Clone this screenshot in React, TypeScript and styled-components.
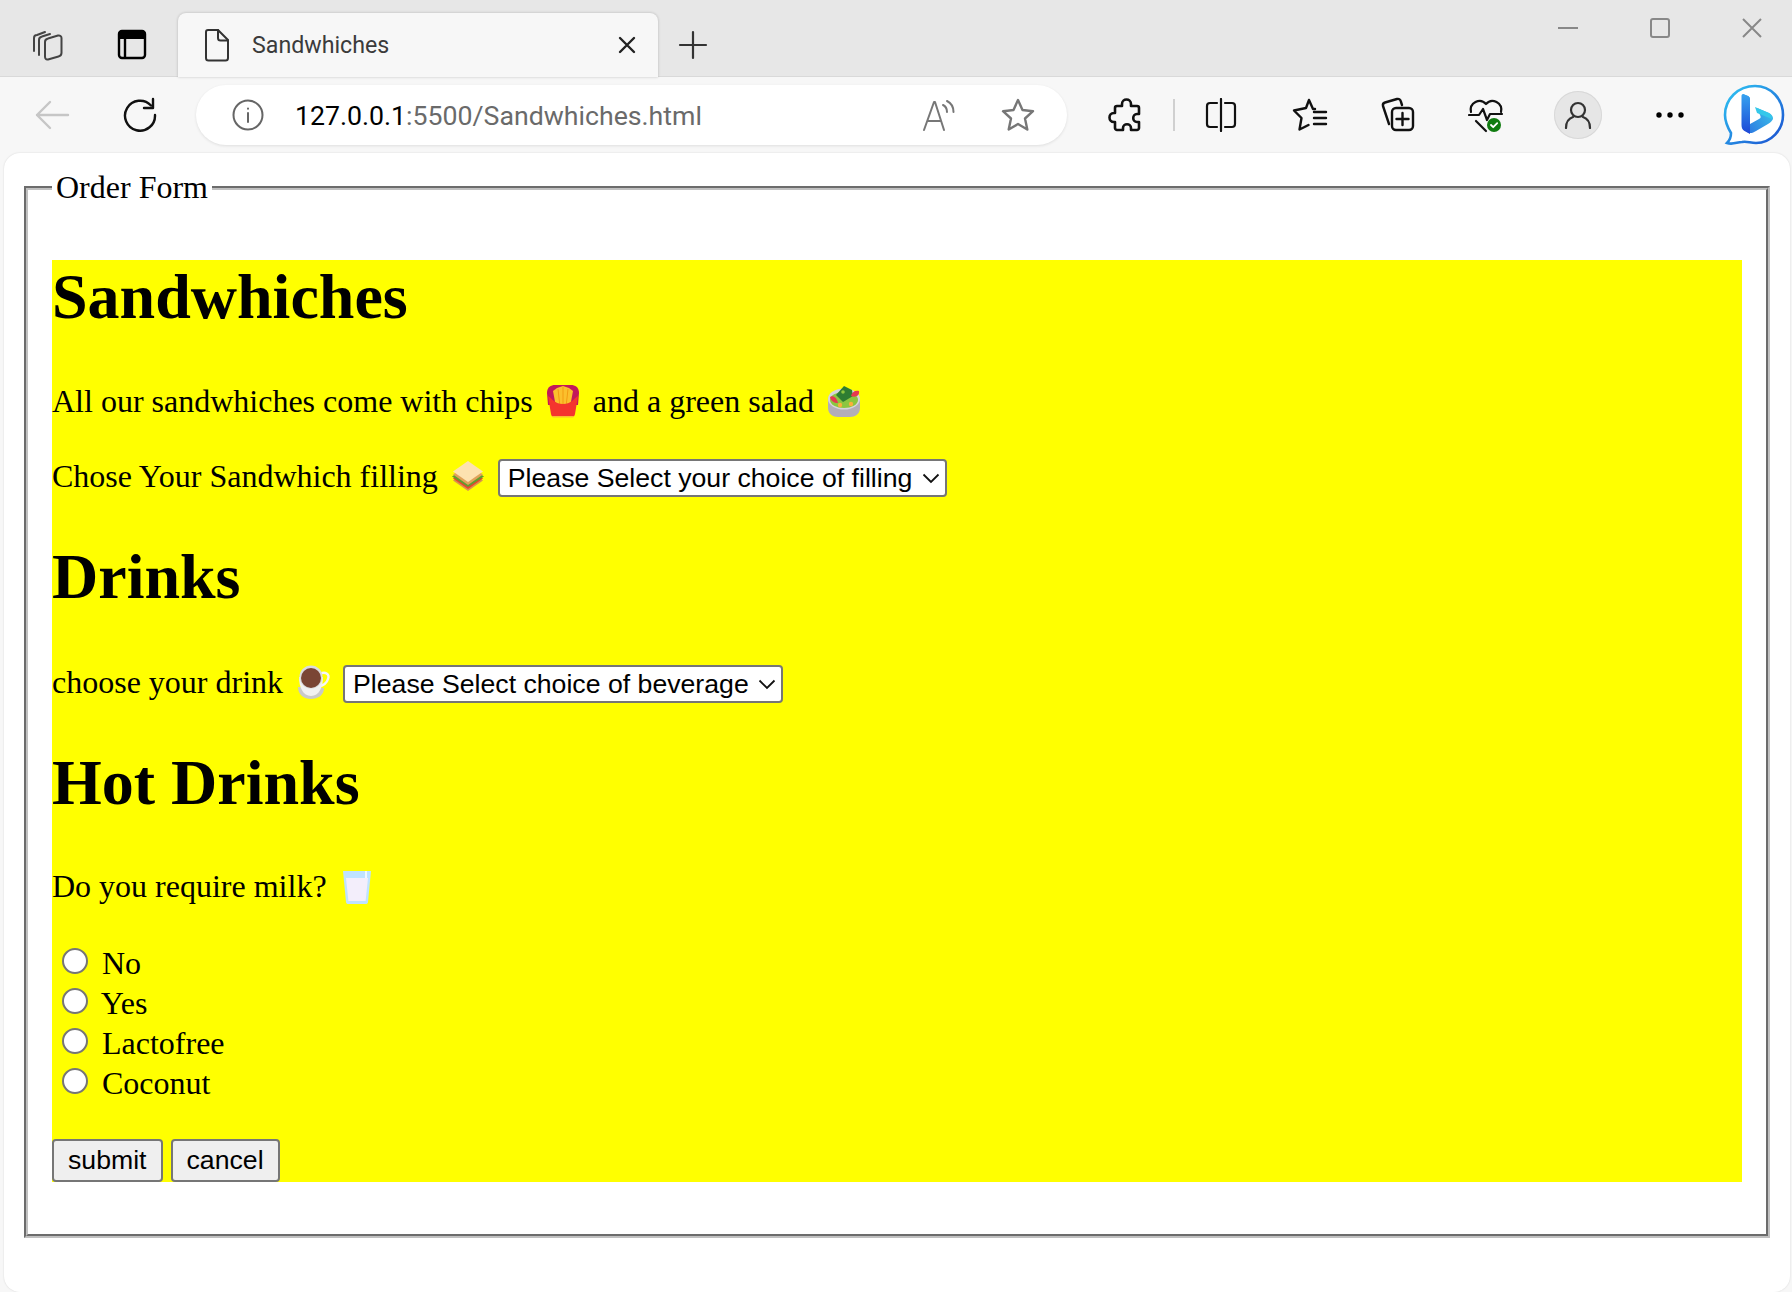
import React from 'react';
import styled, { createGlobalStyle } from 'styled-components';

const GlobalStyle = createGlobalStyle`
  html, body {
    margin: 0;
    padding: 0;
    background: #f7f7f7;
  }
  body {
    width: 1792px;
    height: 1292px;
    overflow: hidden;
  }
`;

const TitleBar = styled.div`
  height: 77px;
  background: #e7e7e7;
  display: flex;
  align-items: flex-end;
  padding-left: 30px;
  box-sizing: border-box;
  box-shadow: inset 0 -1px 0 #d9d9d9;
`;

const StripIcon = styled.div<{ $gap?: number }>`
  width: 36px;
  height: 36px;
  margin: 0 0 14px ${(p) => p.$gap ?? 0}px;
  flex: none;
`;

const Tab = styled.div`
  width: 480px;
  height: 64px;
  margin-left: 28px;
  padding: 0 22px 0 26px;
  box-sizing: border-box;
  display: flex;
  align-items: center;
  background: #f7f7f7;
  border-radius: 8px 8px 0 0;
  box-shadow: 0 0 3px rgba(0, 0, 0, 0.22);
  position: relative;
`;

const TabTitle = styled.span`
  margin-left: 22px;
  flex: 1;
  font: 400 23.2px Roboto, 'Noto Sans', sans-serif;
  color: #3b3b3b;
`;

const WindowControls = styled.div`
  margin-left: auto;
  margin-right: -6px;
  align-self: flex-start;
  display: flex;
  padding-top: 12px;
`;

const WindowButton = styled.div`
  width: 92px;
  height: 32px;
  display: flex;
  align-items: center;
  justify-content: center;
`;

const Toolbar = styled.div`
  height: 76px;
  display: flex;
  align-items: center;
  padding-left: 34px;
  box-sizing: border-box;
  background: #f7f7f7;
`;

const ToolSlot = styled.div<{ $gap?: number; $size?: number }>`
  flex: none;
  width: ${(p) => p.$size ?? 40}px;
  height: ${(p) => p.$size ?? 40}px;
  margin-left: ${(p) => p.$gap ?? 48}px;
  display: flex;
  align-items: center;
  justify-content: center;
`;

const AddressPill = styled.div`
  flex: none;
  width: 871px;
  height: 60px;
  margin-left: 38px;
  padding: 0 31px 0 36px;
  box-sizing: border-box;
  display: flex;
  align-items: center;
  background: #fff;
  border-radius: 30px;
  box-shadow: 0 1px 3px rgba(0, 0, 0, 0.1);
`;

const UrlText = styled.div`
  margin-left: 31px;
  flex: 1;
  font: 400 26.7px Roboto, 'Noto Sans', sans-serif;
  color: #6a6a6a;
  white-space: nowrap;
  padding-top: 1px;

  b {
    font-weight: 400;
    color: #000;
  }
`;

const Separator = styled.div`
  flex: none;
  width: 2px;
  height: 32px;
  margin-left: 27px;
  background: #d0d0d0;
`;

const ProfileCircle = styled.div`
  flex: none;
  width: 48px;
  height: 48px;
  margin-left: 48px;
  border-radius: 50%;
  background: #e6e6e6;
  box-shadow: inset 0 0 0 1px #d8d8d8;
  display: flex;
  align-items: center;
  justify-content: center;
`;

const BingSlot = styled.div`
  flex: none;
  width: 64px;
  height: 64px;
  margin-left: 32px;
`;

const Page = styled.main`
  height: 1139px;
  margin-left: 4px;
  margin-right: 2px;
  padding: 16px 16px 0 16px;
  box-sizing: border-box;
  background: #fff;
  border-radius: 16px;
  box-shadow: 0 0 2px rgba(0, 0, 0, 0.14);
  font: 400 32px 'Liberation Serif', 'Times New Roman', serif;
  color: #000;
`;

const OrderFieldset = styled.fieldset`
  margin: 0 4px;
  padding: 11px 24px 20px;
  border: 4px groove #c0c0c0;
`;

const OrderLegend = styled.legend`
  padding: 0 4px;
`;

const Menu = styled.div`
  background: #ff0;
  display: flow-root;
  margin: 43px 0 32px;
`;

const Heading = styled.h1`
  margin: 43px 0;
  font-size: 64px;
  font-weight: 700;
  line-height: 74px;

  &:first-child {
    margin-top: 0;
  }
`;

const Line = styled.p<{ $bottom?: number; $leading?: number; $height?: number }>`
  height: ${(p) => p.$height ?? 44}px;
  margin: 0 0 ${(p) => p.$bottom ?? 32}px;
  line-height: ${(p) => p.$leading ?? 47}px;
  white-space: nowrap;
`;

const EmojiBox = styled.svg`
  width: 44px;
  height: 44px;
  vertical-align: top;
  overflow: visible;
`;

const ChoiceSelect = styled.select<{ $top: number }>`
  appearance: none;
  height: 38px;
  margin: ${(p) => p.$top}px 0 0;
  padding: 0 32px 0 8px;
  vertical-align: top;
  font: 400 26.67px 'Liberation Sans', Arial, sans-serif;
  color: #000;
  border: 2px solid #767676;
  border-radius: 4px;
  background: #fff
    url("data:image/svg+xml,%3Csvg xmlns='http://www.w3.org/2000/svg' width='18' height='11'%3E%3Cpath d='M1.500 1.500 9 9l7.500-7.500' fill='none' stroke='%23111' stroke-width='1.800'/%3E%3C/svg%3E")
    no-repeat right 5px center;
`;

const RadioList = styled.div`
  margin: 0 0 32px;
`;

const RadioRow = styled.div`
  white-space: nowrap;
`;

const Radio = styled.input`
  appearance: none;
  box-sizing: border-box;
  width: 26px;
  height: 26px;
  margin: 6px 6px 0 10px;
  background: #fff;
  border: 2px solid #767676;
  border-radius: 50%;
`;

const ButtonRow = styled.div`
  display: flex;
  gap: 8px;
  padding-top: 5px;
`;

const FormButton = styled.button`
  height: 43px;
  padding: 0 14px;
  font: 400 26.67px 'Liberation Sans', Arial, sans-serif;
  color: #000;
  background: #efefef;
  border: 2px solid #767676;
  border-radius: 4px;
`;

const ICON = { fill: 'none', stroke: '#111', strokeWidth: 2.4, strokeLinecap: 'round', strokeLinejoin: 'round' } as const;

const Fries = () => (
  <EmojiBox viewBox="0 0 44 44" role="img" aria-label="fries">
    <path d="M6 16C6 10 10 8 14 8h16c4 0 8 2 8 8l-1 12H7z" fill="#c2185b" />
    <path d="M12 14l4-3 6-2 6 2 4 3-3 16H15z" fill="#fbc02d" />
    <path d="M17 12l2 18M22 10v20M27 12l-2 18" stroke="#f39c12" strokeWidth="1" />
    <path d="M7 19c3 1 6 8 15 8s12-7 15-8l-3 18c-.3 2-1.500 3-3 3H13c-1.500 0-2.700-1-3-3z" fill="#f4342e" />
    <path d="M10.500 39h23l-1.500 1.500H12z" fill="#fbc02d" />
  </EmojiBox>
);

const Salad = () => (
  <EmojiBox viewBox="0 0 44 44" role="img" aria-label="salad">
    <path d="M6 22h32v9c0 6-5 9-10 9H16c-5 0-10-3-10-9z" fill="#b3aeb8" />
    <ellipse cx="22" cy="22" rx="16" ry="10.500" fill="#d8d4dc" />
    <ellipse cx="22" cy="23" rx="14" ry="8" fill="#8cc63f" />
    <path d="M14 18l8-9 8 4 1 6-10 6z" fill="#2e7d32" />
    <path d="M8 20c3-2 7 1 8 6-4 0-7-2-8-6zM29 19c1-4 4-6 8-5 1 4-3 7-8 5z" fill="#e53950" />
    <circle cx="18" cy="28" r="2.200" fill="#fbb03b" />
    <circle cx="29" cy="27" r="2.200" fill="#fbb03b" />
    <circle cx="21" cy="15" r="1.800" fill="#8cc63f" />
  </EmojiBox>
);

const Sandwich = () => (
  <EmojiBox viewBox="0 0 44 44" role="img" aria-label="sandwich">
    <path d="M22 17 37 27.500 22 38 7 27.500z" fill="#d9964c" />
    <path d="M22 15 37 25.500 22 36 7 25.500z" fill="#e8452f" />
    <path d="M22 13 38 23.500 22 34 6 23.500z" fill="#5e9e2e" />
    <path d="M22 11 37 21.500 22 32 7 21.500z" fill="#e0a25a" />
    <path d="M22 8 37 18.500 22 29 7 18.500z" fill="#fde2b0" />
  </EmojiBox>
);

const Coffee = () => (
  <EmojiBox viewBox="0 0 44 44" role="img" aria-label="coffee">
    <path d="M7 30c0 8 6 12 13 12s13-4 13-11z" fill="#c9c9c9" />
    <path d="M29 17c5-3 10 0 8 5-1 4-5 7-9 7" fill="none" stroke="#f7f7f7" strokeWidth="2.400" />
    <path d="M8 20c0 10 4 19 12 19s12-9 12-19z" fill="#f1f1f1" />
    <circle cx="20" cy="20" r="11.500" fill="#dcdcdc" />
    <circle cx="20" cy="21" r="10" fill="#7a4534" />
  </EmojiBox>
);

const Milk = () => (
  <EmojiBox viewBox="0 0 44 44" role="img" aria-label="milk">
    <path d="M8 8h28l-3 31c-.2 1.500-1 2-2.500 2h-17C12 41 11.200 40.500 11 39z" fill="#bfe3ff" />
    <path d="M11 15h22l-2.400 23H13.400z" fill="#f3eefb" />
    <path d="M31 15V8" stroke="#fff" strokeWidth="1.500" />
  </EmojiBox>
);

const BingLogo = () => (
  <svg width="64" height="64" viewBox="0 0 64 64">
    <defs>
      <linearGradient id="ring" x1="0" y1="0" x2="1" y2="1">
        <stop offset="0" stopColor="#2fc6f3" />
        <stop offset="1" stopColor="#1b4fd0" />
      </linearGradient>
      <linearGradient id="stem" x1="0" y1="0" x2="0" y2="1">
        <stop offset="0" stopColor="#37a3f0" />
        <stop offset="1" stopColor="#1d46d6" />
      </linearGradient>
      <linearGradient id="wave" x1="0" y1="1" x2="1" y2="0">
        <stop offset="0" stopColor="#2a6fe0" />
        <stop offset="1" stopColor="#3fd6ec" />
      </linearGradient>
    </defs>
    <path
      d="M33 3c16 0 28 13 28 29 0 15-12 28-27 28-6 0-9-2-14-1-5 0-9 3-15 1 3-3 4-6 4-10C6 45 3 39 3 32 3 16 16 3 33 3z"
      fill="#fff"
      stroke="url(#ring)"
      strokeWidth="2.600"
    />
    <path d="M21 11l5 2c1 .5 2 1.500 2 3v25l9-5c2-1 2-2 1-4l-3-7 12 5c3 2 4 3 4 6-1 2-2 3-5 5l-12 7c-3 2-6 3-9 1l-4-3z" fill="url(#wave)" />
    <path d="M21 11c-1 0-1.500 1-1.500 2v29c0 3 1 5 3 6l5.500 3V16c0-1.500-1-2.500-2-3z" fill="url(#stem)" />
    <path d="M33 24l14 6c2 1 3 3 3 6l-15-6z" fill="#35c8ea" />
  </svg>
);

const App: React.FC = () => (
  <>
    <GlobalStyle />
    <TitleBar>
      <StripIcon>
        <svg width="36" height="36" viewBox="0 0 36 36" {...ICON} stroke="#444" strokeWidth="2">
          <path d="M4 24V11c0-2 1-3 3-3l8-3" />
          <path d="M9 28V13c0-2 1-3 3-3.500L20 7" />
          <path d="M15 30V15c0-2 1-3 3-3.500l10-3c2-.5 3.500 1 3.500 2.500v15c0 2-1 3-3 3.500l-10.500 3c-2 .5-3-1-3-3z" />
        </svg>
      </StripIcon>
      <StripIcon $gap={48}>
        <svg width="36" height="36" viewBox="0 0 36 36">
          <rect x="5" y="4" width="26" height="27" rx="3" fill="none" stroke="#000" strokeWidth="2.400" />
          <path d="M5 7a3 3 0 0 1 3-3h20a3 3 0 0 1 3 3v5H5z" fill="#000" />
          <path d="M11 12v19" stroke="#000" strokeWidth="2.400" />
        </svg>
      </StripIcon>
      <Tab>
        <svg width="26" height="34" viewBox="0 0 26 34" {...ICON} stroke="#333" strokeWidth="2">
          <path d="M4 2h10l10 10v18c0 1.500-1 2.500-2.500 2.500h-17C3 32.500 2 31.500 2 30V4c0-1.500 1-2 2-2z" />
          <path d="M14 2v8c0 1.500 1 2.500 2.500 2.500H24" />
        </svg>
        <TabTitle>Sandwhiches</TabTitle>
        <svg width="18" height="18" viewBox="0 0 18 18" {...ICON} stroke="#222">
          <path d="M2 2l14 14M16 2 2 16" />
        </svg>
      </Tab>
      <StripIcon $gap={17}>
        <svg width="36" height="36" viewBox="0 0 36 36" {...ICON} stroke="#333" strokeWidth="2.200">
          <path d="M18 5v26M5 18h26" />
        </svg>
      </StripIcon>
      <WindowControls>
        <WindowButton>
          <svg width="22" height="4" viewBox="0 0 22 4"><path d="M1 2h20" stroke="#888" strokeWidth="2" /></svg>
        </WindowButton>
        <WindowButton>
          <svg width="22" height="22" viewBox="0 0 22 22"><rect x="2" y="2" width="18" height="18" rx="2" fill="none" stroke="#888" strokeWidth="2" /></svg>
        </WindowButton>
        <WindowButton>
          <svg width="22" height="22" viewBox="0 0 22 22"><path d="M2 2l18 18M20 2 2 20" stroke="#888" strokeWidth="2" /></svg>
        </WindowButton>
      </WindowControls>
    </TitleBar>
    <Toolbar>
      <ToolSlot $gap={0} $size={36}>
        <svg width="36" height="32" viewBox="0 0 36 32" {...ICON} stroke="#c6c6c6">
          <path d="M34 16H3M16 3 3 16l13 13" />
        </svg>
      </ToolSlot>
      <ToolSlot $gap={52} $size={36}>
        <svg width="36" height="36" viewBox="0 0 36 36" {...ICON} stroke="#111">
          <path d="M29 8.500A15 15 0 1 0 33 18" />
          <path d="M31 2v9h-9" />
        </svg>
      </ToolSlot>
      <AddressPill>
        <svg width="32" height="32" viewBox="0 0 32 32" {...ICON} stroke="#666" strokeWidth="2">
          <circle cx="16" cy="16" r="14.500" />
          <path d="M16 14v9M16 9.500v.2" />
        </svg>
        <UrlText>
          <b>127.0.0.1</b>:5500/Sandwhiches.html
        </UrlText>
        <ToolSlot $gap={0} $size={36}>
          <svg width="36" height="36" viewBox="0 0 36 36" {...ICON} stroke="#777" strokeWidth="2">
            <path d="M4 33 14 5h1l9 28M7.500 24h13" />
            <path d="M23 8c3 1.500 4 4 4 7M27 4c4 2 6.500 6 6.500 11" />
          </svg>
        </ToolSlot>
        <ToolSlot $gap={44} $size={36}>
          <svg width="36" height="36" viewBox="0 0 36 36" {...ICON} stroke="#777">
            <path d="M18 3l4.500 10 10.500 1.200-8 7.300 2.300 11L18 27l-9.300 5.500 2.300-11-8-7.300L13.500 13z" />
          </svg>
        </ToolSlot>
      </AddressPill>
      <ToolSlot $gap={39}>
        <svg width="36" height="36" viewBox="0 0 36 36" {...ICON} strokeWidth="2.600">
          <path d="M14 7c0-6 9-6 9 0v2h6c1.500 0 2 1 2 2v6h-2c-5 0-5 8 0 8h2v6c0 1-1 2-2 2h-6v-2c0-5-8-5-8 0v2H9c-1 0-2-1-2-2v-6H6c-6 0-6-9 0-9h1v-5c0-1.500 1-2 2-2h5z" />
        </svg>
      </ToolSlot>
      <Separator />
      <ToolSlot $gap={26}>
        <svg width="32" height="34" viewBox="0 0 32 34" {...ICON} strokeWidth="2.200">
          <path d="M12 5H5C3 5 2 6 2 8v18c0 2 1 3 3 3h7M20 5h7c2 0 3 1 3 3v18c0 2-1 3-3 3h-7M16 1v32" />
        </svg>
      </ToolSlot>
      <ToolSlot $gap={49}>
        <svg width="36" height="36" viewBox="0 0 36 36" {...ICON} strokeWidth="2.400">
          <path d="M17 3l4 9h2M14 11 2 13.500l7.500 7.500-2 11.500 9-4.500M17 3l-3 8" />
          <path d="M22 15h12M22 21h12M22 27h12" />
        </svg>
      </ToolSlot>
      <ToolSlot $gap={48}>
        <svg width="36" height="36" viewBox="0 0 36 36" {...ICON} strokeWidth="2.400">
          <path d="M9 27 3 9c-.5-2 .5-3 2-3.500L17 2c2-.5 3.500.500 4 3l1 3" />
          <rect x="12" y="11" width="21" height="22" rx="4" />
          <path d="M22.500 16v12M16.500 22h12" />
        </svg>
      </ToolSlot>
      <ToolSlot $gap={48}>
        <svg width="36" height="36" viewBox="0 0 36 36" {...ICON} strokeWidth="2.200">
          <path d="M3 15C1 6 12 0 18 7c6-7 17-1 15 8" />
          <path d="M1 18h10l4-6 4 11 3-6h12" />
          <path d="M8 24l10 10" />
          <circle cx="26" cy="28" r="7" fill="#107c10" stroke="none" />
          <path d="M23 28l2.200 2.200 4-4" stroke="#fff" strokeWidth="1.800" />
        </svg>
      </ToolSlot>
      <ProfileCircle>
        <svg width="28" height="28" viewBox="0 0 28 28" {...ICON} stroke="#333" strokeWidth="2.200">
          <circle cx="14" cy="9" r="7" />
          <path d="M2 27c0-7 4-10 7-11M26 27c0-7-4-10-7-11" />
        </svg>
      </ProfileCircle>
      <ToolSlot $gap={48}>
        <svg width="28" height="8" viewBox="0 0 28 8">
          <circle cx="3" cy="4" r="2.700" fill="#000" />
          <circle cx="14" cy="4" r="2.700" fill="#000" />
          <circle cx="25" cy="4" r="2.700" fill="#000" />
        </svg>
      </ToolSlot>
      <BingSlot>
        <BingLogo />
      </BingSlot>
    </Toolbar>
    <Page>
      <OrderFieldset>
        <OrderLegend>Order Form</OrderLegend>
        <Menu>
          <Heading>Sandwhiches</Heading>
          <Line $leading={48}>
            All our sandwhiches come with chips <Fries /> and a green salad <Salad />
          </Line>
          <Line $bottom={0}>
            Chose Your Sandwhich filling <Sandwich />{' '}
            <ChoiceSelect $top={6} defaultValue="filling">
              <option value="filling">Please Select your choice of filling</option>
            </ChoiceSelect>
          </Line>
          <Heading>Drinks</Heading>
          <Line $bottom={0} $leading={51} $height={46}>
            choose your drink <Coffee />{' '}
            <ChoiceSelect $top={8} defaultValue="beverage">
              <option value="beverage">Please Select choice of beverage</option>
            </ChoiceSelect>
          </Line>
          <Heading>Hot Drinks</Heading>
          <Line $bottom={35}>
            Do you require milk? <Milk />
          </Line>
          <RadioList>
            {['No', 'Yes', 'Lactofree', 'Coconut'].map((choice) => (
              <RadioRow key={choice}>
                <Radio type="radio" name="milk" value={choice} /> {choice}
              </RadioRow>
            ))}
          </RadioList>
          <ButtonRow>
            <FormButton type="button">submit</FormButton>
            <FormButton type="button">cancel</FormButton>
          </ButtonRow>
        </Menu>
      </OrderFieldset>
    </Page>
  </>
);

export default App;
